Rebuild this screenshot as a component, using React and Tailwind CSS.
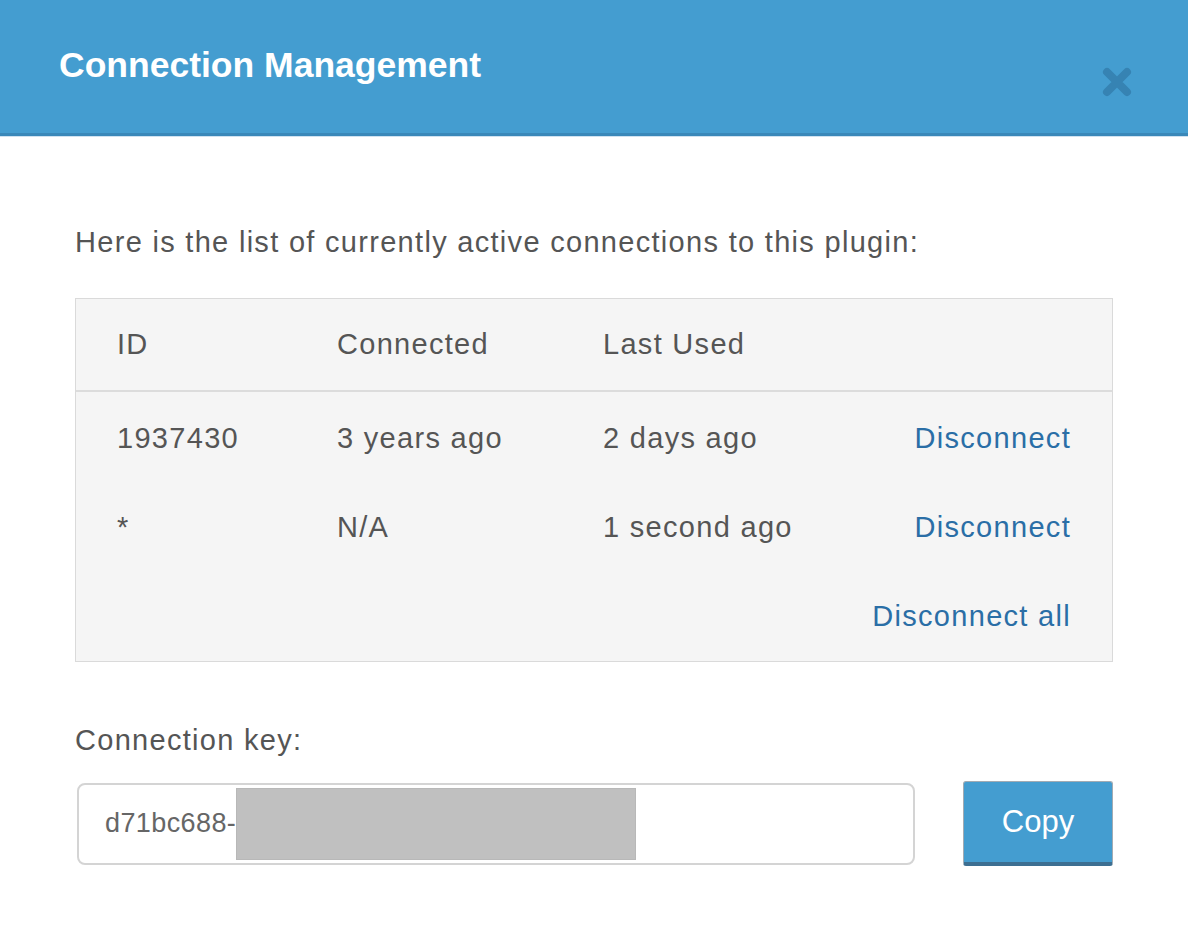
const rows = [
  { id: '1937430', connected: '3 years ago', lastUsed: '2 days ago' },
  { id: '*', connected: 'N/A', lastUsed: '1 second ago' },
];

const App = () => {
  return (
    <div className="w-[1188px] h-[934px] bg-white font-['Liberation_Sans',Arial,sans-serif] text-[#555]">
      {/* Header */}
      <header className="h-[136px] bg-[#449dd0] border-b-[3px] border-[#3a88b9] flex items-start justify-between pl-[59px] pr-[52px]">
        <h1 className="mt-[45px] text-[35.5px] leading-[40px] font-bold text-white">Connection Management</h1>
        <button className="mt-[64px] w-[38px] h-[36px] flex items-center justify-center">
          <svg width="34" height="34" viewBox="0 0 34 34">
            <path d="M7 7 L27 27 M27 7 L7 27" stroke="#3683b3" strokeWidth="8" strokeLinecap="round" />
          </svg>
        </button>
      </header>
      <div className="h-px bg-[#cfe2f1]" />

      {/* Body */}
      <main className="px-[75px] text-[29px] tracking-[1.3px]">
        <p className="mt-[88px] leading-[34px]">Here is the list of currently active connections to this plugin:</p>

        <div className="mt-[39px] border border-[#dadada] bg-[#f5f5f5]">
          <div className="h-[93px] border-b-2 border-[#dcdcdc] grid grid-cols-[220px_266px_1fr] items-center pl-[41px] pr-[41px]">
            <span>ID</span>
            <span>Connected</span>
            <span>Last Used</span>
          </div>
          <div className="pt-[2px]">
            {rows.map((row, i) => (
              <div key={i} className="h-[89px] grid grid-cols-[220px_266px_1fr_auto] items-center pl-[41px] pr-[41px]">
                <span>{row.id}</span>
                <span>{row.connected}</span>
                <span>{row.lastUsed}</span>
                <a href="#" className="text-[#2a6ea6]">Disconnect</a>
              </div>
            ))}
            <div className="h-[89px] flex items-center justify-end pr-[41px]">
              <a href="#" className="text-[#2a6ea6]">Disconnect all</a>
            </div>
          </div>
        </div>

        <p className="mt-[61px] leading-[34px]">Connection key:</p>

        <div className="mt-[24px] flex items-center justify-between">
          <div className="ml-[2px] w-[838px] h-[82px] border-2 border-[#d4d4d4] rounded-[8px] flex items-center pl-[26px]">
            <span className="text-[27px] tracking-[0.4px] text-[#666]">d71bc688-</span>
            <span className="w-[400px] h-[72px] bg-[#c0c0c0] border border-[#b8b8b8]" />
          </div>
          <button className="w-[150px] h-[85px] bg-[#449dd0] border border-[#a2abb3] border-b-[4px] border-b-[#3d6f92] rounded-[3px] text-white text-[31px] tracking-normal">
            Copy
          </button>
        </div>
      </main>
    </div>
  );
};

export default App;
